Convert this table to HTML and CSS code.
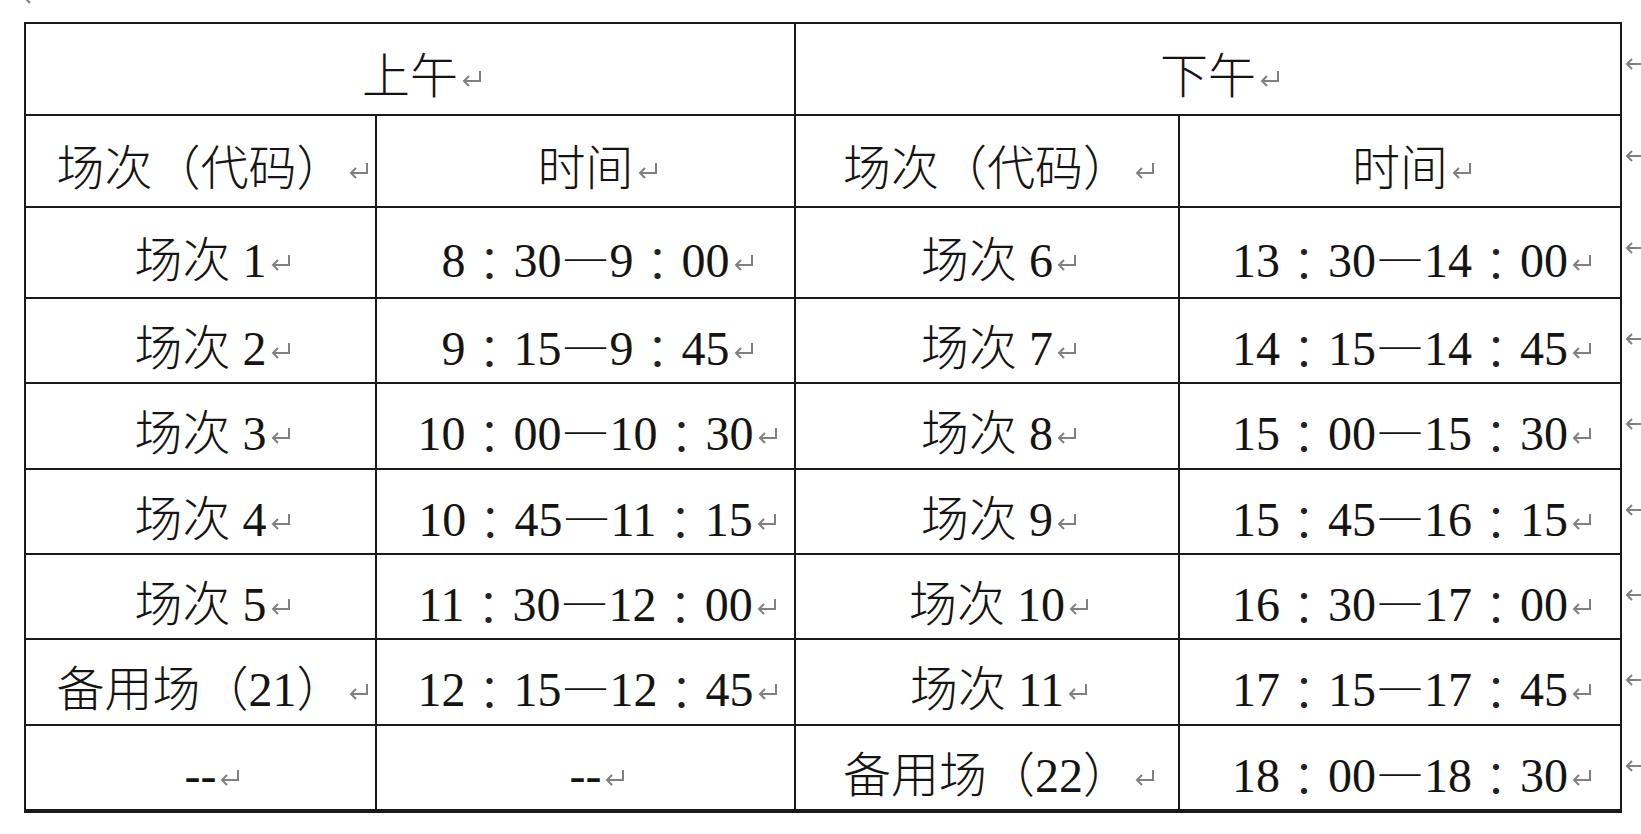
FILE: index.html
```html
<!DOCTYPE html>
<html lang="zh-CN">
<head>
<meta charset="utf-8">
<title>场次时间表</title>
<link rel="stylesheet" href="styles.css">
</head>
<body>
<div class="page">
  <div class="pre"><svg class="pm" viewBox="0 0 22 20"><path d="M19 2V12H3M8 7L3 12L8 17"/></svg></div>
  <div class="wrap">
    <div class="tbl">
      <div class="c span2">上午<svg class="pm" viewBox="0 0 22 20"><path d="M19 2V12H3M8 7L3 12L8 17"/></svg></div>
      <div class="c span2">下午<svg class="pm" viewBox="0 0 22 20"><path d="M19 2V12H3M8 7L3 12L8 17"/></svg></div>

      <div class="c">场次（代码）<svg class="pm" viewBox="0 0 22 20"><path d="M19 2V12H3M8 7L3 12L8 17"/></svg></div>
      <div class="c">时间<svg class="pm" viewBox="0 0 22 20"><path d="M19 2V12H3M8 7L3 12L8 17"/></svg></div>
      <div class="c">场次（代码）<svg class="pm" viewBox="0 0 22 20"><path d="M19 2V12H3M8 7L3 12L8 17"/></svg></div>
      <div class="c">时间<svg class="pm" viewBox="0 0 22 20"><path d="M19 2V12H3M8 7L3 12L8 17"/></svg></div>

      <div class="c">场次 1<svg class="pm" viewBox="0 0 22 20"><path d="M19 2V12H3M8 7L3 12L8 17"/></svg></div>
      <div class="c t">8<span class="col">：</span>30<span class="dash">—</span>9<span class="col">：</span>00<svg class="pm" viewBox="0 0 22 20"><path d="M19 2V12H3M8 7L3 12L8 17"/></svg></div>
      <div class="c">场次 6<svg class="pm" viewBox="0 0 22 20"><path d="M19 2V12H3M8 7L3 12L8 17"/></svg></div>
      <div class="c t">13<span class="col">：</span>30<span class="dash">—</span>14<span class="col">：</span>00<svg class="pm" viewBox="0 0 22 20"><path d="M19 2V12H3M8 7L3 12L8 17"/></svg></div>

      <div class="c">场次 2<svg class="pm" viewBox="0 0 22 20"><path d="M19 2V12H3M8 7L3 12L8 17"/></svg></div>
      <div class="c t">9<span class="col">：</span>15<span class="dash">—</span>9<span class="col">：</span>45<svg class="pm" viewBox="0 0 22 20"><path d="M19 2V12H3M8 7L3 12L8 17"/></svg></div>
      <div class="c">场次 7<svg class="pm" viewBox="0 0 22 20"><path d="M19 2V12H3M8 7L3 12L8 17"/></svg></div>
      <div class="c t">14<span class="col">：</span>15<span class="dash">—</span>14<span class="col">：</span>45<svg class="pm" viewBox="0 0 22 20"><path d="M19 2V12H3M8 7L3 12L8 17"/></svg></div>

      <div class="c">场次 3<svg class="pm" viewBox="0 0 22 20"><path d="M19 2V12H3M8 7L3 12L8 17"/></svg></div>
      <div class="c t">10<span class="col">：</span>00<span class="dash">—</span>10<span class="col">：</span>30<svg class="pm" viewBox="0 0 22 20"><path d="M19 2V12H3M8 7L3 12L8 17"/></svg></div>
      <div class="c">场次 8<svg class="pm" viewBox="0 0 22 20"><path d="M19 2V12H3M8 7L3 12L8 17"/></svg></div>
      <div class="c t">15<span class="col">：</span>00<span class="dash">—</span>15<span class="col">：</span>30<svg class="pm" viewBox="0 0 22 20"><path d="M19 2V12H3M8 7L3 12L8 17"/></svg></div>

      <div class="c">场次 4<svg class="pm" viewBox="0 0 22 20"><path d="M19 2V12H3M8 7L3 12L8 17"/></svg></div>
      <div class="c t">10<span class="col">：</span>45<span class="dash">—</span>11<span class="col">：</span>15<svg class="pm" viewBox="0 0 22 20"><path d="M19 2V12H3M8 7L3 12L8 17"/></svg></div>
      <div class="c">场次 9<svg class="pm" viewBox="0 0 22 20"><path d="M19 2V12H3M8 7L3 12L8 17"/></svg></div>
      <div class="c t">15<span class="col">：</span>45<span class="dash">—</span>16<span class="col">：</span>15<svg class="pm" viewBox="0 0 22 20"><path d="M19 2V12H3M8 7L3 12L8 17"/></svg></div>

      <div class="c">场次 5<svg class="pm" viewBox="0 0 22 20"><path d="M19 2V12H3M8 7L3 12L8 17"/></svg></div>
      <div class="c t">11<span class="col">：</span>30<span class="dash">—</span>12<span class="col">：</span>00<svg class="pm" viewBox="0 0 22 20"><path d="M19 2V12H3M8 7L3 12L8 17"/></svg></div>
      <div class="c">场次 10<svg class="pm" viewBox="0 0 22 20"><path d="M19 2V12H3M8 7L3 12L8 17"/></svg></div>
      <div class="c t">16<span class="col">：</span>30<span class="dash">—</span>17<span class="col">：</span>00<svg class="pm" viewBox="0 0 22 20"><path d="M19 2V12H3M8 7L3 12L8 17"/></svg></div>

      <div class="c">备用场（21）<svg class="pm" viewBox="0 0 22 20"><path d="M19 2V12H3M8 7L3 12L8 17"/></svg></div>
      <div class="c t">12<span class="col">：</span>15<span class="dash">—</span>12<span class="col">：</span>45<svg class="pm" viewBox="0 0 22 20"><path d="M19 2V12H3M8 7L3 12L8 17"/></svg></div>
      <div class="c">场次 11<svg class="pm" viewBox="0 0 22 20"><path d="M19 2V12H3M8 7L3 12L8 17"/></svg></div>
      <div class="c t">17<span class="col">：</span>15<span class="dash">—</span>17<span class="col">：</span>45<svg class="pm" viewBox="0 0 22 20"><path d="M19 2V12H3M8 7L3 12L8 17"/></svg></div>

      <div class="c last">--<svg class="pm" viewBox="0 0 22 20"><path d="M19 2V12H3M8 7L3 12L8 17"/></svg></div>
      <div class="c last">--<svg class="pm" viewBox="0 0 22 20"><path d="M19 2V12H3M8 7L3 12L8 17"/></svg></div>
      <div class="c last">备用场（22）<svg class="pm" viewBox="0 0 22 20"><path d="M19 2V12H3M8 7L3 12L8 17"/></svg></div>
      <div class="c t last">18<span class="col">：</span>00<span class="dash">—</span>18<span class="col">：</span>30<svg class="pm" viewBox="0 0 22 20"><path d="M19 2V12H3M8 7L3 12L8 17"/></svg></div>
    </div>
    <div class="ends">
      <div class="e"><svg class="pm" viewBox="0 0 22 20"><path d="M19 2V12H3M8 7L3 12L8 17"/></svg></div>
      <div class="e"><svg class="pm" viewBox="0 0 22 20"><path d="M19 2V12H3M8 7L3 12L8 17"/></svg></div>
      <div class="e"><svg class="pm" viewBox="0 0 22 20"><path d="M19 2V12H3M8 7L3 12L8 17"/></svg></div>
      <div class="e"><svg class="pm" viewBox="0 0 22 20"><path d="M19 2V12H3M8 7L3 12L8 17"/></svg></div>
      <div class="e"><svg class="pm" viewBox="0 0 22 20"><path d="M19 2V12H3M8 7L3 12L8 17"/></svg></div>
      <div class="e"><svg class="pm" viewBox="0 0 22 20"><path d="M19 2V12H3M8 7L3 12L8 17"/></svg></div>
      <div class="e"><svg class="pm" viewBox="0 0 22 20"><path d="M19 2V12H3M8 7L3 12L8 17"/></svg></div>
      <div class="e"><svg class="pm" viewBox="0 0 22 20"><path d="M19 2V12H3M8 7L3 12L8 17"/></svg></div>
      <div class="e"><svg class="pm" viewBox="0 0 22 20"><path d="M19 2V12H3M8 7L3 12L8 17"/></svg></div>
    </div>
  </div>
</div>
</body>
</html>
```

FILE: styles.css
```css
html, body {
  margin: 0;
  padding: 0;
  background: #ffffff;
}

body {
  width: 1641px;
  height: 834px;
  overflow: hidden;
  font-family: "Liberation Serif", "Noto Sans CJK SC", serif;
  font-size: 48px;
  line-height: 48px;
  color: #141414;
}

.page {
  padding-left: 24px;
}

.pre {
  height: 22px;
  overflow: hidden;
}

.pre .pm {
  display: block;
  margin-top: -16px;
  margin-left: -2px;
}

.wrap {
  display: flex;
  align-items: flex-start;
}

.tbl {
  display: grid;
  grid-template-columns: 351px 419px 384px 442px;
  grid-template-rows: 92px 92px 91px 85px 86px 85px 85px 86px 87px;
  border-left: 2px solid #1a1a1a;
  border-top: 2px solid #1a1a1a;
}

.c {
  box-sizing: border-box;
  display: flex;
  align-items: center;
  justify-content: center;
  padding-top: 16px;
  border-right: 2px solid #1a1a1a;
  border-bottom: 2px solid #1a1a1a;
  white-space: nowrap;
  font-weight: 300;
}

.t {
  font-family: "Liberation Serif", "Noto Sans CJK TC", serif;
  font-weight: 400;
}

.col {
  font-family: "Noto Sans CJK TC", sans-serif;
  font-weight: 300;
  color: #222;
}

.span2 {
  grid-column: span 2;
}

.last {
  border-bottom-width: 4px;
}

.dash {
  font-family: "Noto Sans CJK TC", sans-serif;
  font-feature-settings: "fwid" 1;
  font-weight: 300;
  position: relative;
  top: -4px;
}

.pm {
  flex: none;
  width: 22px;
  height: 20px;
  margin-left: 3px;
  margin-right: -25px;
  align-self: center;
  position: relative;
  top: 2px;
  fill: none;
  stroke: #808080;
  stroke-width: 2;
}

.ends {
  display: grid;
  grid-template-rows: 92px 92px 91px 85px 86px 85px 85px 86px 87px;
  padding-top: 2px;
}

.e {
  padding-top: 28px;
  padding-left: 2px;
}

.e .pm {
  display: block;
  margin: 0;
  top: 0;
}
```
